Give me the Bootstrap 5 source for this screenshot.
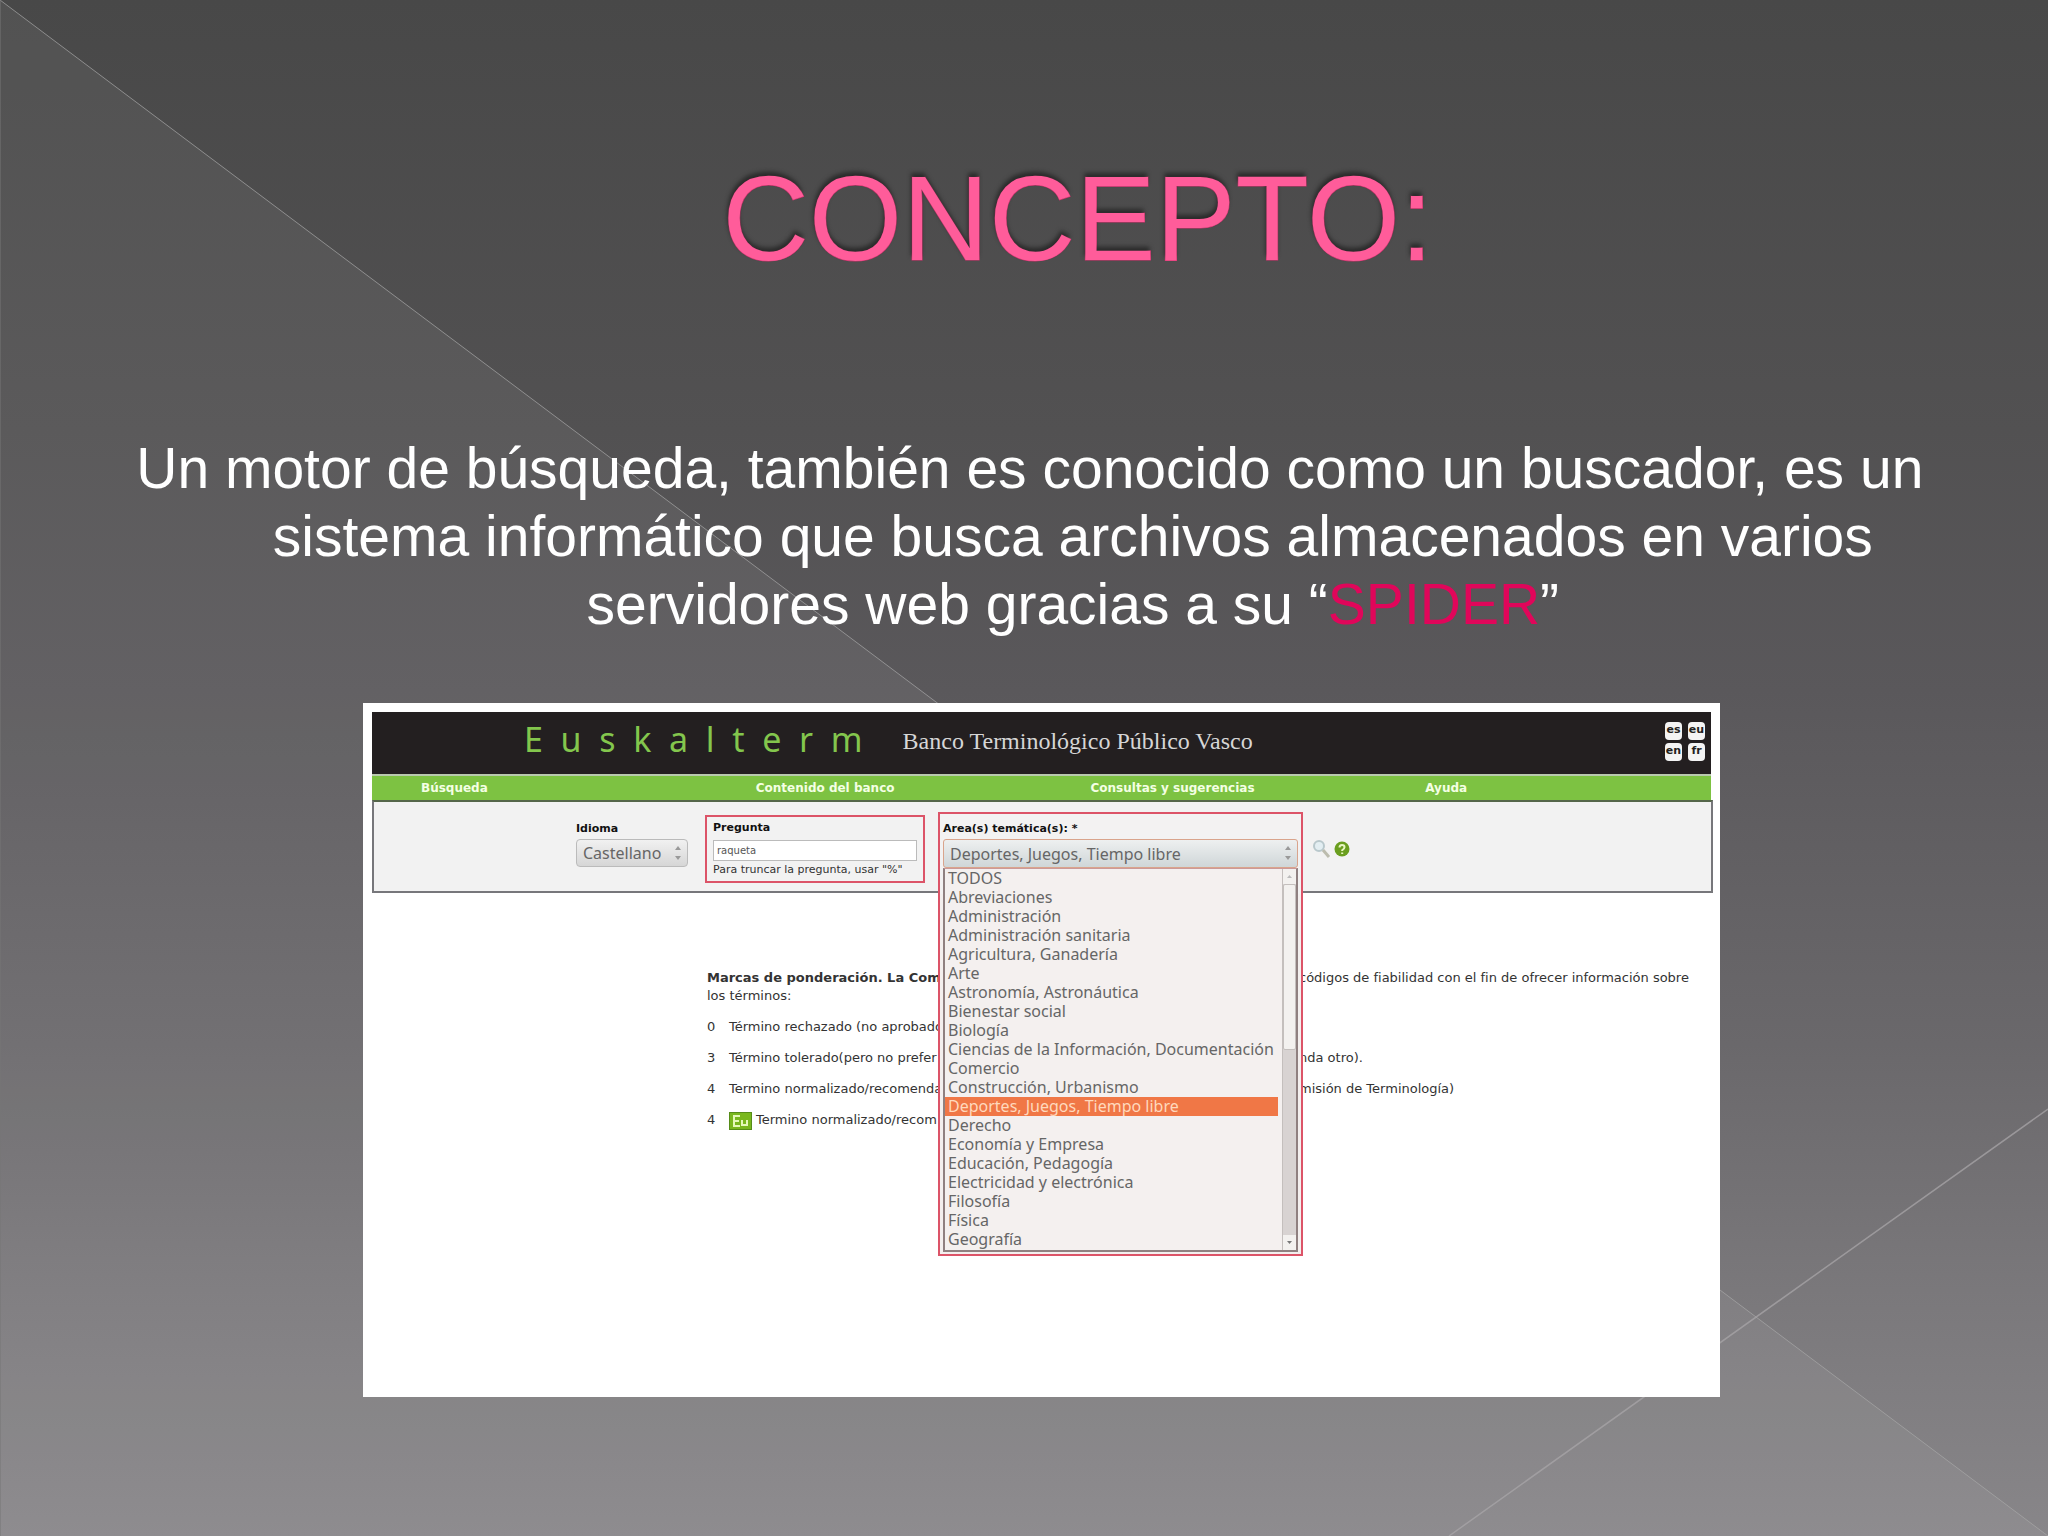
<!DOCTYPE html>
<html lang="es">
<head>
<meta charset="utf-8">
<meta name="viewport" content="width=device-width, initial-scale=1">
<title>Concepto</title>
<link href="https://cdn.jsdelivr.net/npm/bootstrap@5.3.0/dist/css/bootstrap.min.css" rel="stylesheet">
<style>
body{background:#8a888b;font-family:"Liberation Sans",Arial,sans-serif}
.slide{min-height:100vh;background:linear-gradient(#484848 0,#525152 28%,#5a585b 45%,#6a686b 68%,#7a787b 84%,#888689 100%);padding:146px 5% 139px 114px}
.backdrop{width:100%;height:100%;z-index:0}
.slide>*:not(.backdrop){z-index:1}
.slide-title{font-size:120px;line-height:144px;color:#ff5c9a;padding-left:96px;margin:0 0 144px;-webkit-text-stroke:1px #d8316f;paint-order:stroke fill;text-shadow:-1px -4px 4px #2b2b2b}
.slide-text{font-size:57px;line-height:68px;color:#fff;padding-left:86px;text-indent:-86px;margin:0 0 65px}
.spider{color:#e0065a}
.shot{width:1357px;max-width:100%;margin-left:249px;background:#fff;padding:9px 7px 0 9px;min-height:694px;font-family:"DejaVu Sans",Verdana,sans-serif;font-size:11px;line-height:18px;color:#333}
.brandbar{background:#231f20;height:62px;padding:0 6px 4px 152px;margin-right:2px;gap:40px}
.wordmark{font:34px/40px "Noto Sans",sans-serif;color:#83c64d;white-space:pre;text-decoration:none;padding-bottom:4px}
.tagline{font:24px/32px "Liberation Serif",serif;color:#d6d6d6}
.langs{display:grid;grid-template-columns:17px 17px;gap:3px 6px}
.langs a{height:18px;border-radius:4px;background:#f4f4f4;color:#231f20;font-weight:bold;line-height:16px;text-align:center;text-decoration:none}
.menubar{background:#7dc242;border-top:2px solid #b9c9ae;height:26px;margin-right:2px}
.menubar a{padding-left:49px;color:#f4ffe4;font-size:12px;font-weight:bold;text-decoration:none;line-height:25px}
.searchbox{background:#f2f2f2;border:2px solid #77777b;border-top-color:#55664a;height:93px;padding-left:202px}
.searchbox label{color:#111;font-weight:bold;line-height:20px;display:block}
.lang-field{width:112px;margin-top:17px;margin-right:17px}
.framed{border:2px solid #dc5468}
.ask{width:220px;height:68px;margin-top:13px;margin-right:13px;padding:1px 6px 0}
.ask input{width:100%;height:21px;border:1px solid #bbb;background:#fff;font-size:10px;padding:0 3px;color:#555;display:block;margin:2px 0}
.hint{line-height:14px;color:#333}
.area{width:365px;height:444px;margin-top:10px;padding:5px 3px 0;z-index:2;background:linear-gradient(#f3f2f2 0 80px,#f3efee 80px)}
.picker{appearance:none;width:100%;height:28px;border:1px solid #bbb;border-radius:4px;background:linear-gradient(#f1f1f1,#d6d6d6);font:16px/24px "Noto Sans",sans-serif;color:#666;padding:0 6px;display:block}
.area .picker{height:29px;border-color:#d9a48c;background:linear-gradient(#eef0f0,#cfd6d8);border-radius:3px}
.picker-wrap svg{right:6px;top:6px;pointer-events:none}
.options{font:16px/19px "Noto Sans",sans-serif;color:#666;background:#f4f0ef;border:2px solid #8f8080;border-top:1px solid #c99;height:384px}
.options li{padding-left:3px;white-space:nowrap}
.options .chosen{background:#f07746;color:#ffd9bd}
.track{width:14px;background:#d8d3d2;border-left:1px solid #c4bfbd}
.thumb{height:166px;background:#f3f1ef;border:1px solid #c4bfbd;border-radius:2px}
.tools{margin:37px 0 0 9px;gap:3px}
.tools button{border:0;background:none;padding:0;line-height:0}
.notes{padding:76px 0 0 335px;font-size:13px}
.notes .cut{width:236px;white-space:nowrap;overflow:hidden;flex:none}
.notes .rest{margin-left:356px;white-space:nowrap}
.notes .item{margin-top:13px}
.notes .mk{width:22px;display:inline-block}
</style>
</head>
<body>
<main class="slide position-relative">
<svg class="backdrop position-absolute top-0 start-0" viewBox="0 0 2048 1536" preserveAspectRatio="none" aria-hidden="true">
<path d="M0 0L2048 1536H0Z" fill="#fff" fill-opacity=".055"/>
<path d="M0 0L2048 1536" stroke="#a8a8a8" stroke-opacity=".7" fill="none"/>
<path d="M1449 1536L2048 1109" stroke="#a8a6a8" stroke-width="1.500" stroke-opacity=".75" fill="none"/>
<path d="M0 0V1536" stroke="#777"/>
</svg>
<h1 class="slide-title position-relative text-center fw-normal">CONCEPTO:</h1>
<p class="slide-text position-relative text-center">Un motor de búsqueda, también es conocido como un buscador, es un sistema informático que busca archivos almacenados en varios servidores web gracias a su “<span class="spider">SPIDER</span>”</p>
<section class="shot position-relative">
<header class="brandbar d-flex align-items-center">
<a class="wordmark" href="#">E  u  s  k  a  l  t  e  r  m</a>
<span class="tagline">Banco Terminológico Público Vasco</span>
<div class="langs ms-auto"><a href="#">es</a><a href="#">eu</a><a href="#">en</a><a href="#">fr</a></div>
</header>
<nav class="menubar d-flex"><a class="col-3" href="#">Búsqueda</a><a class="col-3" href="#">Contenido del banco</a><a class="col-3" href="#">Consultas y sugerencias</a><a class="col-3" href="#">Ayuda</a></nav>
<form class="searchbox d-flex align-items-start">
<div class="lang-field"><label for="idioma">Idioma</label>
<div class="picker-wrap position-relative"><select class="picker" id="idioma"><option>Castellano</option></select>
<svg class="position-absolute" width="8" height="16" viewBox="0 0 8 16" fill="#999"><path d="M1 5L4 1L7 5ZM1 11L4 15L7 11Z"/></svg></div></div>
<div class="ask framed"><label for="pregunta">Pregunta</label><input id="pregunta" type="text" value="raqueta"><div class="hint text-nowrap">Para truncar la pregunta, usar "%"</div></div>
<div class="area framed position-relative"><label for="area">Area(s) temática(s): *</label>
<div class="picker-wrap position-relative"><select class="picker" id="area"><option>Deportes, Juegos, Tiempo libre</option></select>
<svg class="position-absolute" width="8" height="16" viewBox="0 0 8 16" fill="#999"><path d="M1 5L4 1L7 5ZM1 11L4 15L7 11Z"/></svg></div>
<div class="options d-flex">
<ul class="list-unstyled flex-grow-1 mb-0 me-1" role="listbox" aria-label="Area(s) temática(s)">
<li role="option">TODOS</li><li role="option">Abreviaciones</li><li role="option">Administración</li><li role="option">Administración sanitaria</li><li role="option">Agricultura, Ganadería</li><li role="option">Arte</li><li role="option">Astronomía, Astronáutica</li><li role="option">Bienestar social</li><li role="option">Biología</li><li role="option">Ciencias de la Información, Documentación</li><li role="option">Comercio</li><li role="option">Construcción, Urbanismo</li><li role="option" class="chosen" aria-selected="true">Deportes, Juegos, Tiempo libre</li><li role="option">Derecho</li><li role="option">Economía y Empresa</li><li role="option">Educación, Pedagogía</li><li role="option">Electricidad y electrónica</li><li role="option">Filosofía</li><li role="option">Física</li><li role="option">Geografía</li>
</ul>
<div class="track d-flex flex-column"><svg width="13" height="15" viewBox="0 0 13 15"><path d="M0 0H13V15H0Z" fill="#f3f1ef"/><path d="M4 9L6.500 6L9 9Z" fill="#bbb"/></svg><div class="thumb"></div><svg class="mt-auto" width="13" height="15" viewBox="0 0 13 15"><path d="M0 0H13V15H0Z" fill="#f3f1ef"/><path d="M4 6L6.500 9L9 6Z" fill="#777"/></svg></div>
</div></div>
<div class="tools d-flex">
<button type="button" aria-label="Buscar"><svg width="19" height="20" viewBox="0 0 19 20" fill="none"><circle cx="7" cy="7" r="5" fill="#e3eef2" stroke="#b9c8cc" stroke-width="2"/><path d="M11 11L17 18" stroke="#bcbcae" stroke-width="3"/></svg></button>
<button type="button" aria-label="Ayuda"><svg width="16" height="16" viewBox="0 0 16 16"><circle cx="8" cy="8" r="7.500" fill="#6a9e1f"/><path d="M5.500 6.500Q5.500 4 8 4T10.500 6.300Q10.500 7.600 8.200 9.200V10M8.200 11.500V13" fill="none" stroke="#e9f6c4" stroke-width="2"/></svg></button>
</div>
</form>
<div class="notes">
<div class="d-flex"><strong class="cut">Marcas de ponderación. La Com</strong><span class="rest">códigos de fiabilidad con el fin de ofrecer información sobre</span></div>
<div>los términos:</div>
<div class="item d-flex"><span class="cut"><span class="mk">0</span>Término rechazado (no aprobado</span></div>
<div class="item d-flex"><span class="cut"><span class="mk">3</span>Término tolerado(pero no prefer</span><span class="rest">nda otro).</span></div>
<div class="item d-flex"><span class="cut"><span class="mk">4</span>Termino normalizado/recomenda</span><span class="rest">misión de Terminología)</span></div>
<div class="item d-flex"><span class="cut"><span class="mk">4</span><svg class="me-1" width="23" height="18" viewBox="0 0 23 18" aria-label="Eu"><rect x=".5" y=".5" width="22" height="17" fill="#79b71e" stroke="#568c18"/><path d="M11 4H5V14H11M5 9H10M13 8V13H18V8" fill="none" stroke="#e4f8b8" stroke-width="2"/></svg>Termino normalizado/recom</span></div>
</div>
</section>
</main>
<script src="https://cdn.jsdelivr.net/npm/bootstrap@5.3.0/dist/js/bootstrap.bundle.min.js"></script>
</body>
</html>
